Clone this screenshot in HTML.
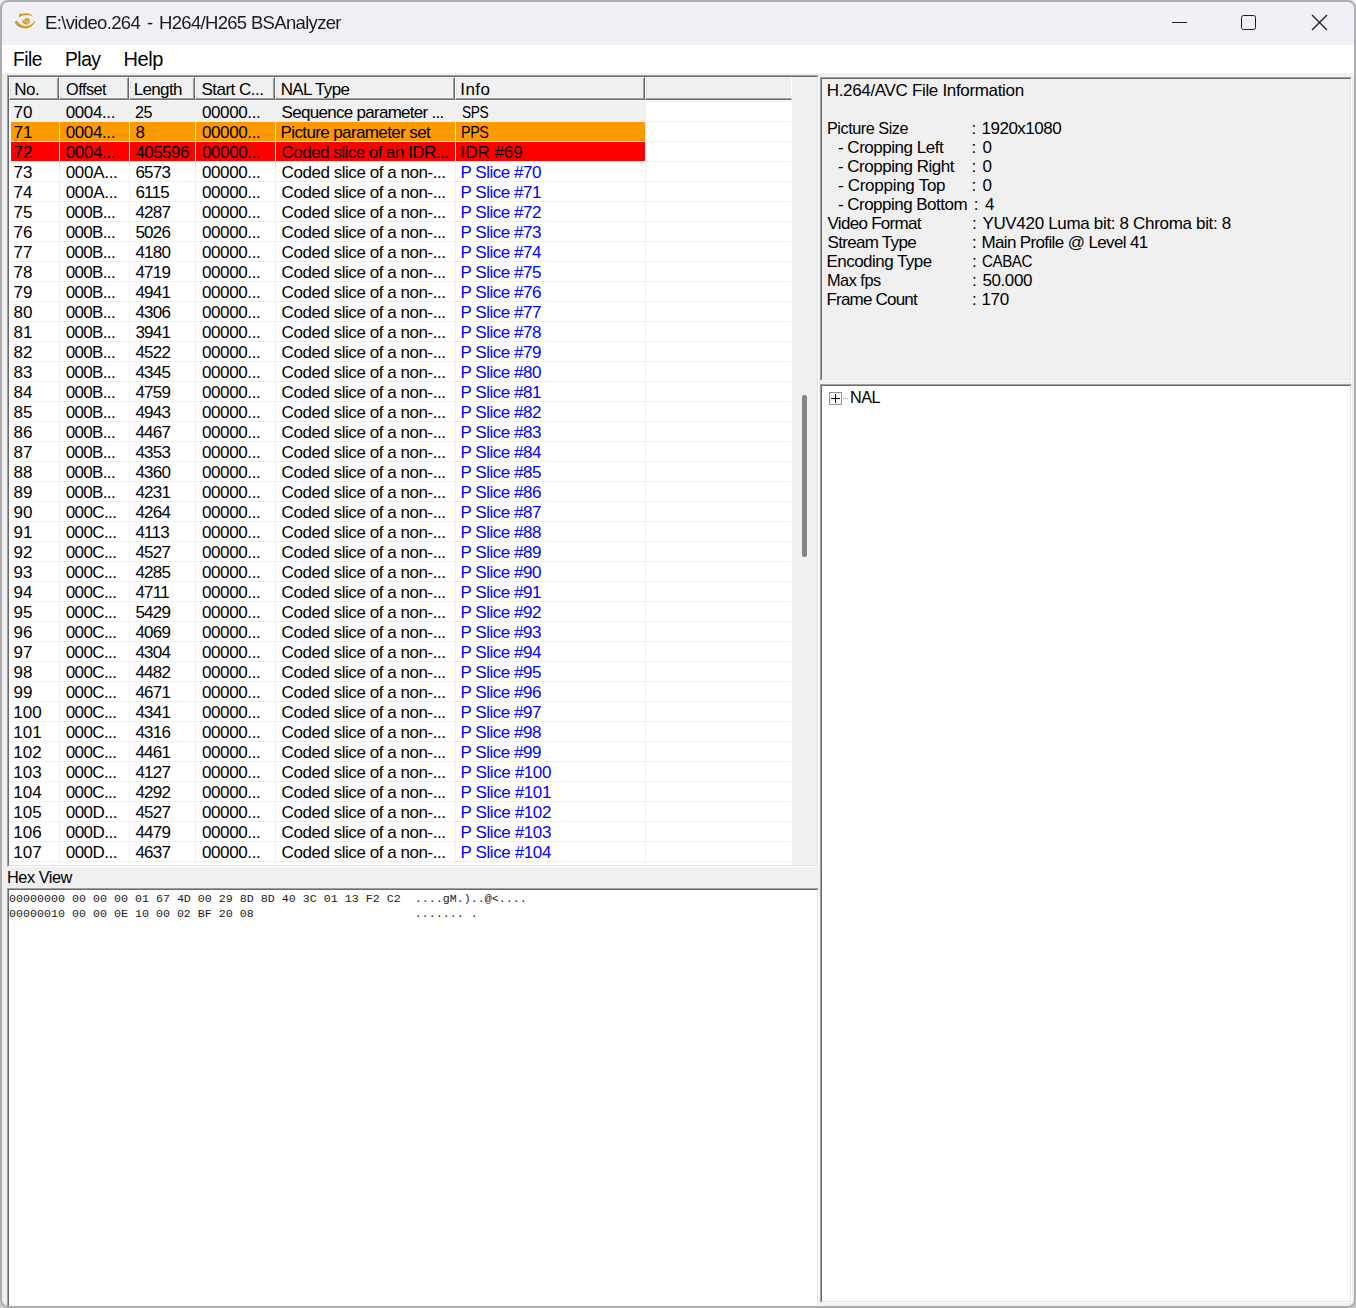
<!DOCTYPE html><html><head><meta charset="utf-8"><title>H264/H265 BSAnalyzer</title><style>
*{margin:0;padding:0;box-sizing:border-box}
html,body{width:1356px;height:1308px;overflow:hidden;background:linear-gradient(#f0f0f0 0,#f0f0f0 50%,#cdcdcd 50%)}
body{position:relative;font-family:"Liberation Sans",sans-serif;color:#000}
.a{position:absolute}
#win{position:absolute;left:0;top:0;width:1356px;height:1308px;border-radius:8px;overflow:hidden;background:#f0f0f0}
#frame{position:absolute;left:0;top:0;width:1356px;height:1308px;border-radius:8px;border:2px solid #adadad;pointer-events:none}
#title{position:absolute;left:0;top:0;width:1356px;height:45px;background:#f0f1f7}
#menu{position:absolute;left:0;top:45px;width:1356px;height:28px;background:#fff}
.t{position:absolute;white-space:pre;line-height:20px;font-size:17px}
.sunk{position:absolute;border-top:1px solid #a0a0a0;border-left:1px solid #a0a0a0;border-right:1px solid #fff;border-bottom:1px solid #fff}
.sunk>.in{position:absolute;left:0;top:0;right:0;bottom:0;border-top:1px solid #696969;border-left:1px solid #696969;border-right:1px solid #e3e3e3;border-bottom:1px solid #e3e3e3}
.hd{position:absolute;top:77px;height:23px;background:#f0f0f0;border-top:1px solid #fff;border-left:1px solid #fff;border-right:1px solid #696969;border-bottom:1px solid #696969;box-shadow:inset -1px -1px 0 #a0a0a0, inset 1px 1px 0 #e3e3e3}
.gh{position:absolute;height:1px;background:#f0f0f0}
.gv{position:absolute;width:1px;background:#f0f0f0}
.rb{position:absolute;height:19px}
.mono{position:absolute;white-space:pre;font-family:"Liberation Mono",monospace;font-size:11.667px;line-height:15px;color:#1a1a1a}
</style></head><body>
<div id="win">
<div id="title"></div>
<svg class="a" style="left:12px;top:10px" width="26" height="22" viewBox="0 0 26 22">
<defs><radialGradient id="pg" cx="0.7" cy="0.65" r="0.8"><stop offset="0" stop-color="#e8c43c"/><stop offset="1" stop-color="#cf9530"/></radialGradient></defs>
<path d="M7.3 7.9 C6.8 6.8 6.8 4.6 7.6 3.6 C8 3 8.6 3.2 9.2 3.9 C11.5 3.2 14.5 3.1 17 3.7 C18.8 4.2 20.3 5.2 21.1 6.6 C19.9 6.2 18.6 5.6 16.8 5.3 C14.5 5 11.5 5.1 9.6 5.7 C8.6 6.1 8 6.9 7.3 7.9 Z" fill="#d39a28"/>
<ellipse cx="15.2" cy="11.2" rx="2.9" ry="3.3" fill="url(#pg)"/>
<path d="M10.4 8.8 C10.1 10.5 10.2 13.6 13.2 14.3 C14.2 14.5 14.8 14.3 15.2 14.1 C13.5 13.9 11.9 12.8 11.4 10.8 C11.2 10 11 9.2 10.4 8.8 Z" fill="#c98b2c"/>
<path d="M3 12.8 C4.8 16.4 9 18.4 13.5 18.4 C18 18.3 21.6 15.5 23.3 11.3 C23.1 10.9 22.8 10.9 22.5 11.1 C20.6 14.4 17.2 16.1 13.6 16.1 C10.2 16.1 7.5 14.3 5.8 11.5 C5.1 10.5 3.8 10.4 3.2 11.3 C2.9 11.8 2.9 12.3 3 12.8 Z" fill="#d29628"/>
</svg>
<div class="a" style="left:1172px;top:22px;width:15px;height:1px;background:#222"></div>
<div class="a" style="left:1241px;top:15px;width:15px;height:15px;border:1.5px solid #1c1c1c;border-radius:2.5px"></div>
<svg class="a" style="left:1311px;top:14px" width="17" height="17" viewBox="0 0 17 17"><path d="M1 1L16 16M16 1L1 16" stroke="#1c1c1c" stroke-width="1.3"/></svg>
<div id="menu"></div>
<div class="sunk" style="left:7px;top:75px;width:812px;height:792px"><div class="in"></div></div>
<div class="a" style="left:9px;top:77px;width:783px;height:788px;background:#fff"></div>
<div class="a" style="left:792px;top:77px;width:25px;height:788px;background:#f0f0f0"></div>
<div class="a" style="left:802px;top:395px;width:5px;height:162px;background:#858585;border-radius:3px"></div>
<div class="hd" style="left:9px;width:50px"></div>
<div class="hd" style="left:59px;width:70px"></div>
<div class="hd" style="left:129px;width:66px"></div>
<div class="hd" style="left:195px;width:80px"></div>
<div class="hd" style="left:275px;width:180px"></div>
<div class="hd" style="left:455px;width:190px"></div>
<div class="hd" style="left:645px;width:147px;border-right:1px solid #fff;box-shadow:inset 0 -1px 0 #a0a0a0, inset 1px 1px 0 #e3e3e3"></div>
<div class="rb" style="left:11px;top:101px;width:634px;height:20px;background:#f0f0f0"></div>
<div class="rb" style="left:11px;top:122px;width:634px;background:#ff9900"></div>
<div class="rb" style="left:11px;top:142px;width:634px;background:#ff0000"></div>
<div class="gh" style="left:9px;top:101px;width:782px"></div>
<div class="gh" style="left:9px;top:121px;width:782px"></div>
<div class="gh" style="left:9px;top:141px;width:782px"></div>
<div class="gh" style="left:9px;top:161px;width:782px"></div>
<div class="gh" style="left:9px;top:181px;width:782px"></div>
<div class="gh" style="left:9px;top:201px;width:782px"></div>
<div class="gh" style="left:9px;top:221px;width:782px"></div>
<div class="gh" style="left:9px;top:241px;width:782px"></div>
<div class="gh" style="left:9px;top:261px;width:782px"></div>
<div class="gh" style="left:9px;top:281px;width:782px"></div>
<div class="gh" style="left:9px;top:301px;width:782px"></div>
<div class="gh" style="left:9px;top:321px;width:782px"></div>
<div class="gh" style="left:9px;top:341px;width:782px"></div>
<div class="gh" style="left:9px;top:361px;width:782px"></div>
<div class="gh" style="left:9px;top:381px;width:782px"></div>
<div class="gh" style="left:9px;top:401px;width:782px"></div>
<div class="gh" style="left:9px;top:421px;width:782px"></div>
<div class="gh" style="left:9px;top:441px;width:782px"></div>
<div class="gh" style="left:9px;top:461px;width:782px"></div>
<div class="gh" style="left:9px;top:481px;width:782px"></div>
<div class="gh" style="left:9px;top:501px;width:782px"></div>
<div class="gh" style="left:9px;top:521px;width:782px"></div>
<div class="gh" style="left:9px;top:541px;width:782px"></div>
<div class="gh" style="left:9px;top:561px;width:782px"></div>
<div class="gh" style="left:9px;top:581px;width:782px"></div>
<div class="gh" style="left:9px;top:601px;width:782px"></div>
<div class="gh" style="left:9px;top:621px;width:782px"></div>
<div class="gh" style="left:9px;top:641px;width:782px"></div>
<div class="gh" style="left:9px;top:661px;width:782px"></div>
<div class="gh" style="left:9px;top:681px;width:782px"></div>
<div class="gh" style="left:9px;top:701px;width:782px"></div>
<div class="gh" style="left:9px;top:721px;width:782px"></div>
<div class="gh" style="left:9px;top:741px;width:782px"></div>
<div class="gh" style="left:9px;top:761px;width:782px"></div>
<div class="gh" style="left:9px;top:781px;width:782px"></div>
<div class="gh" style="left:9px;top:801px;width:782px"></div>
<div class="gh" style="left:9px;top:821px;width:782px"></div>
<div class="gh" style="left:9px;top:841px;width:782px"></div>
<div class="gh" style="left:9px;top:861px;width:782px"></div>
<div class="gv" style="left:59px;top:100px;height:765px"></div>
<div class="gv" style="left:129px;top:100px;height:765px"></div>
<div class="gv" style="left:195px;top:100px;height:765px"></div>
<div class="gv" style="left:275px;top:100px;height:765px"></div>
<div class="gv" style="left:455px;top:100px;height:765px"></div>
<div class="gv" style="left:645px;top:100px;height:765px"></div>
<div class="sunk" style="left:7px;top:888px;width:812px;height:430px"><div class="in"></div></div>
<div class="a" style="left:9px;top:890px;width:808px;height:420px;background:#fff"></div>
<div class="mono" style="left:9px;top:892px">00000000 00 00 00 01 67 4D 00 29 8D 8D 40 3C 01 13 F2 C2  ....gM.)..@&lt;....
00000010 00 00 0E 10 00 02 BF 20 08                       ....... .</div>
<div class="sunk" style="left:820px;top:77px;width:532px;height:304px"><div class="in"></div></div>
<div class="sunk" style="left:820px;top:384px;width:532px;height:919px"><div class="in"></div></div>
<div class="a" style="left:822px;top:386px;width:528px;height:915px;background:#fff"></div>
<div class="a" style="left:829px;top:392px;width:13px;height:13px;border:1px solid #919191;background:#fff"></div>
<div class="a" style="left:831px;top:398px;width:9px;height:1px;background:#000"></div>
<div class="a" style="left:835px;top:394px;width:1px;height:9px;background:#000"></div>
<div class="a" style="left:843px;top:398px;width:1px;height:1px;background:#a0a0a0"></div>
<div class="a" style="left:845px;top:398px;width:1px;height:1px;background:#a0a0a0"></div>
<div class="a" style="left:847px;top:398px;width:1px;height:1px;background:#a0a0a0"></div>
<div class="t" style="left:45.20px;top:13px;font-size:18.5px;letter-spacing:-0.642px;color:#1b1b1b;will-change:transform">E:\video.264</div>
<div class="t" style="left:147.20px;top:13px;font-size:18.5px;color:#1b1b1b;will-change:transform">-</div>
<div class="t" style="left:158.90px;top:13px;font-size:18.5px;letter-spacing:-0.680px;color:#1b1b1b;will-change:transform">H264/H265 BSAnalyzer</div>
<div class="t" style="left:13.14px;top:49px;font-size:20px;letter-spacing:-0.500px;transform:scaleX(0.9560);transform-origin:0 0">File</div>
<div class="t" style="left:65.04px;top:49px;font-size:20px;letter-spacing:-0.500px;transform:scaleX(0.9614);transform-origin:0 0">Play</div>
<div class="t" style="left:123.40px;top:49px;font-size:20px;letter-spacing:-0.370px">Help</div>
<div class="t" style="left:14.30px;top:80px;letter-spacing:-0.466px">No.</div>
<div class="t" style="left:65.80px;top:80px;letter-spacing:-0.500px;transform:scaleX(0.9552);transform-origin:0 0">Offset</div>
<div class="t" style="left:133.70px;top:80px;letter-spacing:-0.648px">Length</div>
<div class="t" style="left:201.50px;top:80px;letter-spacing:-0.516px">Start C...</div>
<div class="t" style="left:280.70px;top:80px;letter-spacing:-0.628px">NAL Type</div>
<div class="t" style="left:460.30px;top:80px;letter-spacing:0.433px">Info</div>
<div class="t" style="left:13.60px;top:103px">70</div>
<div class="t" style="left:65.70px;top:103px;letter-spacing:-0.377px">0004...</div>
<div class="t" style="left:135.40px;top:103px;letter-spacing:-0.500px;transform:scaleX(0.9468);transform-origin:0 0">25</div>
<div class="t" style="left:201.90px;top:103px;letter-spacing:-0.374px">00000...</div>
<div class="t" style="left:281.60px;top:103px;letter-spacing:-0.711px">Sequence parameter ...</div>
<div class="t" style="left:461.50px;top:103px;letter-spacing:-0.500px;transform:scaleX(0.8048);transform-origin:0 0">SPS</div>
<div class="t" style="left:13.60px;top:123px">71</div>
<div class="t" style="left:65.70px;top:123px;letter-spacing:-0.377px">0004...</div>
<div class="t" style="left:135.40px;top:123px;letter-spacing:-0.755px">8</div>
<div class="t" style="left:201.90px;top:123px;letter-spacing:-0.374px">00000...</div>
<div class="t" style="left:280.60px;top:123px;letter-spacing:-0.619px">Picture parameter set</div>
<div class="t" style="left:460.66px;top:123px;letter-spacing:-0.500px;transform:scaleX(0.8429);transform-origin:0 0">PPS</div>
<div class="t" style="left:13.60px;top:143px">72</div>
<div class="t" style="left:65.70px;top:143px;letter-spacing:-0.377px">0004...</div>
<div class="t" style="left:135.40px;top:143px;letter-spacing:-0.555px">405596</div>
<div class="t" style="left:201.90px;top:143px;letter-spacing:-0.374px">00000...</div>
<div class="t" style="left:281.60px;top:143px;letter-spacing:-0.531px">Coded slice of an IDR...</div>
<div class="t" style="left:460.50px;top:143px;letter-spacing:-0.018px">IDR #69</div>
<div class="t" style="left:13.60px;top:163px">73</div>
<div class="t" style="left:65.70px;top:163px;letter-spacing:-0.291px">000A...</div>
<div class="t" style="left:135.40px;top:163px;letter-spacing:-0.755px">6573</div>
<div class="t" style="left:201.90px;top:163px;letter-spacing:-0.374px">00000...</div>
<div class="t" style="left:281.60px;top:163px;letter-spacing:-0.457px">Coded slice of a non-...</div>
<div class="t" style="left:460.50px;top:163px;letter-spacing:-0.484px;color:#0000ff">P Slice #70</div>
<div class="t" style="left:13.60px;top:183px">74</div>
<div class="t" style="left:65.70px;top:183px;letter-spacing:-0.291px">000A...</div>
<div class="t" style="left:135.40px;top:183px;letter-spacing:-0.755px">6115</div>
<div class="t" style="left:201.90px;top:183px;letter-spacing:-0.374px">00000...</div>
<div class="t" style="left:281.60px;top:183px;letter-spacing:-0.457px">Coded slice of a non-...</div>
<div class="t" style="left:460.50px;top:183px;letter-spacing:-0.484px;color:#0000ff">P Slice #71</div>
<div class="t" style="left:13.60px;top:203px">75</div>
<div class="t" style="left:65.70px;top:203px;letter-spacing:-0.658px">000B...</div>
<div class="t" style="left:135.40px;top:203px;letter-spacing:-0.755px">4287</div>
<div class="t" style="left:201.90px;top:203px;letter-spacing:-0.374px">00000...</div>
<div class="t" style="left:281.60px;top:203px;letter-spacing:-0.457px">Coded slice of a non-...</div>
<div class="t" style="left:460.50px;top:203px;letter-spacing:-0.484px;color:#0000ff">P Slice #72</div>
<div class="t" style="left:13.60px;top:223px">76</div>
<div class="t" style="left:65.70px;top:223px;letter-spacing:-0.658px">000B...</div>
<div class="t" style="left:135.40px;top:223px;letter-spacing:-0.755px">5026</div>
<div class="t" style="left:201.90px;top:223px;letter-spacing:-0.374px">00000...</div>
<div class="t" style="left:281.60px;top:223px;letter-spacing:-0.457px">Coded slice of a non-...</div>
<div class="t" style="left:460.50px;top:223px;letter-spacing:-0.484px;color:#0000ff">P Slice #73</div>
<div class="t" style="left:13.60px;top:243px">77</div>
<div class="t" style="left:65.70px;top:243px;letter-spacing:-0.658px">000B...</div>
<div class="t" style="left:135.40px;top:243px;letter-spacing:-0.755px">4180</div>
<div class="t" style="left:201.90px;top:243px;letter-spacing:-0.374px">00000...</div>
<div class="t" style="left:281.60px;top:243px;letter-spacing:-0.457px">Coded slice of a non-...</div>
<div class="t" style="left:460.50px;top:243px;letter-spacing:-0.484px;color:#0000ff">P Slice #74</div>
<div class="t" style="left:13.60px;top:263px">78</div>
<div class="t" style="left:65.70px;top:263px;letter-spacing:-0.658px">000B...</div>
<div class="t" style="left:135.40px;top:263px;letter-spacing:-0.755px">4719</div>
<div class="t" style="left:201.90px;top:263px;letter-spacing:-0.374px">00000...</div>
<div class="t" style="left:281.60px;top:263px;letter-spacing:-0.457px">Coded slice of a non-...</div>
<div class="t" style="left:460.50px;top:263px;letter-spacing:-0.484px;color:#0000ff">P Slice #75</div>
<div class="t" style="left:13.60px;top:283px">79</div>
<div class="t" style="left:65.70px;top:283px;letter-spacing:-0.658px">000B...</div>
<div class="t" style="left:135.40px;top:283px;letter-spacing:-0.755px">4941</div>
<div class="t" style="left:201.90px;top:283px;letter-spacing:-0.374px">00000...</div>
<div class="t" style="left:281.60px;top:283px;letter-spacing:-0.457px">Coded slice of a non-...</div>
<div class="t" style="left:460.50px;top:283px;letter-spacing:-0.484px;color:#0000ff">P Slice #76</div>
<div class="t" style="left:13.60px;top:303px">80</div>
<div class="t" style="left:65.70px;top:303px;letter-spacing:-0.658px">000B...</div>
<div class="t" style="left:135.40px;top:303px;letter-spacing:-0.755px">4306</div>
<div class="t" style="left:201.90px;top:303px;letter-spacing:-0.374px">00000...</div>
<div class="t" style="left:281.60px;top:303px;letter-spacing:-0.457px">Coded slice of a non-...</div>
<div class="t" style="left:460.50px;top:303px;letter-spacing:-0.484px;color:#0000ff">P Slice #77</div>
<div class="t" style="left:13.60px;top:323px">81</div>
<div class="t" style="left:65.70px;top:323px;letter-spacing:-0.658px">000B...</div>
<div class="t" style="left:135.40px;top:323px;letter-spacing:-0.755px">3941</div>
<div class="t" style="left:201.90px;top:323px;letter-spacing:-0.374px">00000...</div>
<div class="t" style="left:281.60px;top:323px;letter-spacing:-0.457px">Coded slice of a non-...</div>
<div class="t" style="left:460.50px;top:323px;letter-spacing:-0.484px;color:#0000ff">P Slice #78</div>
<div class="t" style="left:13.60px;top:343px">82</div>
<div class="t" style="left:65.70px;top:343px;letter-spacing:-0.658px">000B...</div>
<div class="t" style="left:135.40px;top:343px;letter-spacing:-0.755px">4522</div>
<div class="t" style="left:201.90px;top:343px;letter-spacing:-0.374px">00000...</div>
<div class="t" style="left:281.60px;top:343px;letter-spacing:-0.457px">Coded slice of a non-...</div>
<div class="t" style="left:460.50px;top:343px;letter-spacing:-0.484px;color:#0000ff">P Slice #79</div>
<div class="t" style="left:13.60px;top:363px">83</div>
<div class="t" style="left:65.70px;top:363px;letter-spacing:-0.658px">000B...</div>
<div class="t" style="left:135.40px;top:363px;letter-spacing:-0.755px">4345</div>
<div class="t" style="left:201.90px;top:363px;letter-spacing:-0.374px">00000...</div>
<div class="t" style="left:281.60px;top:363px;letter-spacing:-0.457px">Coded slice of a non-...</div>
<div class="t" style="left:460.50px;top:363px;letter-spacing:-0.484px;color:#0000ff">P Slice #80</div>
<div class="t" style="left:13.60px;top:383px">84</div>
<div class="t" style="left:65.70px;top:383px;letter-spacing:-0.658px">000B...</div>
<div class="t" style="left:135.40px;top:383px;letter-spacing:-0.755px">4759</div>
<div class="t" style="left:201.90px;top:383px;letter-spacing:-0.374px">00000...</div>
<div class="t" style="left:281.60px;top:383px;letter-spacing:-0.457px">Coded slice of a non-...</div>
<div class="t" style="left:460.50px;top:383px;letter-spacing:-0.484px;color:#0000ff">P Slice #81</div>
<div class="t" style="left:13.60px;top:403px">85</div>
<div class="t" style="left:65.70px;top:403px;letter-spacing:-0.658px">000B...</div>
<div class="t" style="left:135.40px;top:403px;letter-spacing:-0.755px">4943</div>
<div class="t" style="left:201.90px;top:403px;letter-spacing:-0.374px">00000...</div>
<div class="t" style="left:281.60px;top:403px;letter-spacing:-0.457px">Coded slice of a non-...</div>
<div class="t" style="left:460.50px;top:403px;letter-spacing:-0.484px;color:#0000ff">P Slice #82</div>
<div class="t" style="left:13.60px;top:423px">86</div>
<div class="t" style="left:65.70px;top:423px;letter-spacing:-0.658px">000B...</div>
<div class="t" style="left:135.40px;top:423px;letter-spacing:-0.755px">4467</div>
<div class="t" style="left:201.90px;top:423px;letter-spacing:-0.374px">00000...</div>
<div class="t" style="left:281.60px;top:423px;letter-spacing:-0.457px">Coded slice of a non-...</div>
<div class="t" style="left:460.50px;top:423px;letter-spacing:-0.484px;color:#0000ff">P Slice #83</div>
<div class="t" style="left:13.60px;top:443px">87</div>
<div class="t" style="left:65.70px;top:443px;letter-spacing:-0.658px">000B...</div>
<div class="t" style="left:135.40px;top:443px;letter-spacing:-0.755px">4353</div>
<div class="t" style="left:201.90px;top:443px;letter-spacing:-0.374px">00000...</div>
<div class="t" style="left:281.60px;top:443px;letter-spacing:-0.457px">Coded slice of a non-...</div>
<div class="t" style="left:460.50px;top:443px;letter-spacing:-0.484px;color:#0000ff">P Slice #84</div>
<div class="t" style="left:13.60px;top:463px">88</div>
<div class="t" style="left:65.70px;top:463px;letter-spacing:-0.658px">000B...</div>
<div class="t" style="left:135.40px;top:463px;letter-spacing:-0.755px">4360</div>
<div class="t" style="left:201.90px;top:463px;letter-spacing:-0.374px">00000...</div>
<div class="t" style="left:281.60px;top:463px;letter-spacing:-0.457px">Coded slice of a non-...</div>
<div class="t" style="left:460.50px;top:463px;letter-spacing:-0.484px;color:#0000ff">P Slice #85</div>
<div class="t" style="left:13.60px;top:483px">89</div>
<div class="t" style="left:65.70px;top:483px;letter-spacing:-0.658px">000B...</div>
<div class="t" style="left:135.40px;top:483px;letter-spacing:-0.755px">4231</div>
<div class="t" style="left:201.90px;top:483px;letter-spacing:-0.374px">00000...</div>
<div class="t" style="left:281.60px;top:483px;letter-spacing:-0.457px">Coded slice of a non-...</div>
<div class="t" style="left:460.50px;top:483px;letter-spacing:-0.484px;color:#0000ff">P Slice #86</div>
<div class="t" style="left:13.60px;top:503px">90</div>
<div class="t" style="left:65.70px;top:503px;letter-spacing:-0.598px">000C...</div>
<div class="t" style="left:135.40px;top:503px;letter-spacing:-0.755px">4264</div>
<div class="t" style="left:201.90px;top:503px;letter-spacing:-0.374px">00000...</div>
<div class="t" style="left:281.60px;top:503px;letter-spacing:-0.457px">Coded slice of a non-...</div>
<div class="t" style="left:460.50px;top:503px;letter-spacing:-0.484px;color:#0000ff">P Slice #87</div>
<div class="t" style="left:13.60px;top:523px">91</div>
<div class="t" style="left:65.70px;top:523px;letter-spacing:-0.598px">000C...</div>
<div class="t" style="left:135.40px;top:523px;letter-spacing:-0.755px">4113</div>
<div class="t" style="left:201.90px;top:523px;letter-spacing:-0.374px">00000...</div>
<div class="t" style="left:281.60px;top:523px;letter-spacing:-0.457px">Coded slice of a non-...</div>
<div class="t" style="left:460.50px;top:523px;letter-spacing:-0.484px;color:#0000ff">P Slice #88</div>
<div class="t" style="left:13.60px;top:543px">92</div>
<div class="t" style="left:65.70px;top:543px;letter-spacing:-0.598px">000C...</div>
<div class="t" style="left:135.40px;top:543px;letter-spacing:-0.755px">4527</div>
<div class="t" style="left:201.90px;top:543px;letter-spacing:-0.374px">00000...</div>
<div class="t" style="left:281.60px;top:543px;letter-spacing:-0.457px">Coded slice of a non-...</div>
<div class="t" style="left:460.50px;top:543px;letter-spacing:-0.484px;color:#0000ff">P Slice #89</div>
<div class="t" style="left:13.60px;top:563px">93</div>
<div class="t" style="left:65.70px;top:563px;letter-spacing:-0.598px">000C...</div>
<div class="t" style="left:135.40px;top:563px;letter-spacing:-0.755px">4285</div>
<div class="t" style="left:201.90px;top:563px;letter-spacing:-0.374px">00000...</div>
<div class="t" style="left:281.60px;top:563px;letter-spacing:-0.457px">Coded slice of a non-...</div>
<div class="t" style="left:460.50px;top:563px;letter-spacing:-0.484px;color:#0000ff">P Slice #90</div>
<div class="t" style="left:13.60px;top:583px">94</div>
<div class="t" style="left:65.70px;top:583px;letter-spacing:-0.598px">000C...</div>
<div class="t" style="left:135.40px;top:583px;letter-spacing:-0.755px">4711</div>
<div class="t" style="left:201.90px;top:583px;letter-spacing:-0.374px">00000...</div>
<div class="t" style="left:281.60px;top:583px;letter-spacing:-0.457px">Coded slice of a non-...</div>
<div class="t" style="left:460.50px;top:583px;letter-spacing:-0.484px;color:#0000ff">P Slice #91</div>
<div class="t" style="left:13.60px;top:603px">95</div>
<div class="t" style="left:65.70px;top:603px;letter-spacing:-0.598px">000C...</div>
<div class="t" style="left:135.40px;top:603px;letter-spacing:-0.755px">5429</div>
<div class="t" style="left:201.90px;top:603px;letter-spacing:-0.374px">00000...</div>
<div class="t" style="left:281.60px;top:603px;letter-spacing:-0.457px">Coded slice of a non-...</div>
<div class="t" style="left:460.50px;top:603px;letter-spacing:-0.484px;color:#0000ff">P Slice #92</div>
<div class="t" style="left:13.60px;top:623px">96</div>
<div class="t" style="left:65.70px;top:623px;letter-spacing:-0.598px">000C...</div>
<div class="t" style="left:135.40px;top:623px;letter-spacing:-0.755px">4069</div>
<div class="t" style="left:201.90px;top:623px;letter-spacing:-0.374px">00000...</div>
<div class="t" style="left:281.60px;top:623px;letter-spacing:-0.457px">Coded slice of a non-...</div>
<div class="t" style="left:460.50px;top:623px;letter-spacing:-0.484px;color:#0000ff">P Slice #93</div>
<div class="t" style="left:13.60px;top:643px">97</div>
<div class="t" style="left:65.70px;top:643px;letter-spacing:-0.598px">000C...</div>
<div class="t" style="left:135.40px;top:643px;letter-spacing:-0.755px">4304</div>
<div class="t" style="left:201.90px;top:643px;letter-spacing:-0.374px">00000...</div>
<div class="t" style="left:281.60px;top:643px;letter-spacing:-0.457px">Coded slice of a non-...</div>
<div class="t" style="left:460.50px;top:643px;letter-spacing:-0.484px;color:#0000ff">P Slice #94</div>
<div class="t" style="left:13.60px;top:663px">98</div>
<div class="t" style="left:65.70px;top:663px;letter-spacing:-0.598px">000C...</div>
<div class="t" style="left:135.40px;top:663px;letter-spacing:-0.755px">4482</div>
<div class="t" style="left:201.90px;top:663px;letter-spacing:-0.374px">00000...</div>
<div class="t" style="left:281.60px;top:663px;letter-spacing:-0.457px">Coded slice of a non-...</div>
<div class="t" style="left:460.50px;top:663px;letter-spacing:-0.484px;color:#0000ff">P Slice #95</div>
<div class="t" style="left:13.60px;top:683px">99</div>
<div class="t" style="left:65.70px;top:683px;letter-spacing:-0.598px">000C...</div>
<div class="t" style="left:135.40px;top:683px;letter-spacing:-0.755px">4671</div>
<div class="t" style="left:201.90px;top:683px;letter-spacing:-0.374px">00000...</div>
<div class="t" style="left:281.60px;top:683px;letter-spacing:-0.457px">Coded slice of a non-...</div>
<div class="t" style="left:460.50px;top:683px;letter-spacing:-0.484px;color:#0000ff">P Slice #96</div>
<div class="t" style="left:13.30px;top:703px">100</div>
<div class="t" style="left:65.70px;top:703px;letter-spacing:-0.598px">000C...</div>
<div class="t" style="left:135.40px;top:703px;letter-spacing:-0.755px">4341</div>
<div class="t" style="left:201.90px;top:703px;letter-spacing:-0.374px">00000...</div>
<div class="t" style="left:281.60px;top:703px;letter-spacing:-0.457px">Coded slice of a non-...</div>
<div class="t" style="left:460.50px;top:703px;letter-spacing:-0.484px;color:#0000ff">P Slice #97</div>
<div class="t" style="left:13.30px;top:723px">101</div>
<div class="t" style="left:65.70px;top:723px;letter-spacing:-0.598px">000C...</div>
<div class="t" style="left:135.40px;top:723px;letter-spacing:-0.755px">4316</div>
<div class="t" style="left:201.90px;top:723px;letter-spacing:-0.374px">00000...</div>
<div class="t" style="left:281.60px;top:723px;letter-spacing:-0.457px">Coded slice of a non-...</div>
<div class="t" style="left:460.50px;top:723px;letter-spacing:-0.484px;color:#0000ff">P Slice #98</div>
<div class="t" style="left:13.30px;top:743px">102</div>
<div class="t" style="left:65.70px;top:743px;letter-spacing:-0.598px">000C...</div>
<div class="t" style="left:135.40px;top:743px;letter-spacing:-0.755px">4461</div>
<div class="t" style="left:201.90px;top:743px;letter-spacing:-0.374px">00000...</div>
<div class="t" style="left:281.60px;top:743px;letter-spacing:-0.457px">Coded slice of a non-...</div>
<div class="t" style="left:460.50px;top:743px;letter-spacing:-0.484px;color:#0000ff">P Slice #99</div>
<div class="t" style="left:13.30px;top:763px">103</div>
<div class="t" style="left:65.70px;top:763px;letter-spacing:-0.598px">000C...</div>
<div class="t" style="left:135.40px;top:763px;letter-spacing:-0.755px">4127</div>
<div class="t" style="left:201.90px;top:763px;letter-spacing:-0.374px">00000...</div>
<div class="t" style="left:281.60px;top:763px;letter-spacing:-0.457px">Coded slice of a non-...</div>
<div class="t" style="left:460.50px;top:763px;letter-spacing:-0.391px;color:#0000ff">P Slice #100</div>
<div class="t" style="left:13.30px;top:783px">104</div>
<div class="t" style="left:65.70px;top:783px;letter-spacing:-0.598px">000C...</div>
<div class="t" style="left:135.40px;top:783px;letter-spacing:-0.755px">4292</div>
<div class="t" style="left:201.90px;top:783px;letter-spacing:-0.374px">00000...</div>
<div class="t" style="left:281.60px;top:783px;letter-spacing:-0.457px">Coded slice of a non-...</div>
<div class="t" style="left:460.50px;top:783px;letter-spacing:-0.391px;color:#0000ff">P Slice #101</div>
<div class="t" style="left:13.30px;top:803px">105</div>
<div class="t" style="left:65.70px;top:803px;letter-spacing:-0.514px">000D...</div>
<div class="t" style="left:135.40px;top:803px;letter-spacing:-0.755px">4527</div>
<div class="t" style="left:201.90px;top:803px;letter-spacing:-0.374px">00000...</div>
<div class="t" style="left:281.60px;top:803px;letter-spacing:-0.457px">Coded slice of a non-...</div>
<div class="t" style="left:460.50px;top:803px;letter-spacing:-0.391px;color:#0000ff">P Slice #102</div>
<div class="t" style="left:13.30px;top:823px">106</div>
<div class="t" style="left:65.70px;top:823px;letter-spacing:-0.514px">000D...</div>
<div class="t" style="left:135.40px;top:823px;letter-spacing:-0.755px">4479</div>
<div class="t" style="left:201.90px;top:823px;letter-spacing:-0.374px">00000...</div>
<div class="t" style="left:281.60px;top:823px;letter-spacing:-0.457px">Coded slice of a non-...</div>
<div class="t" style="left:460.50px;top:823px;letter-spacing:-0.391px;color:#0000ff">P Slice #103</div>
<div class="t" style="left:13.30px;top:843px">107</div>
<div class="t" style="left:65.70px;top:843px;letter-spacing:-0.514px">000D...</div>
<div class="t" style="left:135.40px;top:843px;letter-spacing:-0.755px">4637</div>
<div class="t" style="left:201.90px;top:843px;letter-spacing:-0.374px">00000...</div>
<div class="t" style="left:281.60px;top:843px;letter-spacing:-0.457px">Coded slice of a non-...</div>
<div class="t" style="left:460.50px;top:843px;letter-spacing:-0.391px;color:#0000ff">P Slice #104</div>
<div class="t" style="left:826.70px;top:81px;letter-spacing:-0.328px">H.264/AVC File Information</div>
<div class="t" style="left:826.54px;top:119px;letter-spacing:-0.500px;transform:scaleX(0.9564);transform-origin:0 0">Picture Size</div>
<div class="t" style="left:971.40px;top:119px">:</div>
<div class="t" style="left:981.60px;top:119px;letter-spacing:-0.510px">1920x1080</div>
<div class="t" style="left:837.90px;top:138px;letter-spacing:-0.473px">- Cropping Left</div>
<div class="t" style="left:971.40px;top:138px">:</div>
<div class="t" style="left:982.60px;top:138px">0</div>
<div class="t" style="left:837.90px;top:157px;letter-spacing:-0.484px">- Cropping Right</div>
<div class="t" style="left:971.40px;top:157px">:</div>
<div class="t" style="left:982.60px;top:157px">0</div>
<div class="t" style="left:837.90px;top:176px;letter-spacing:-0.273px">- Cropping Top</div>
<div class="t" style="left:971.40px;top:176px">:</div>
<div class="t" style="left:982.60px;top:176px">0</div>
<div class="t" style="left:837.90px;top:195px;letter-spacing:-0.518px">- Cropping Bottom</div>
<div class="t" style="left:973.70px;top:195px">:</div>
<div class="t" style="left:984.90px;top:195px">4</div>
<div class="t" style="left:827.50px;top:214px;letter-spacing:-0.710px">Video Format</div>
<div class="t" style="left:972.10px;top:214px">:</div>
<div class="t" style="left:982.40px;top:214px;letter-spacing:-0.324px">YUV420 Luma bit: 8 Chroma bit: 8</div>
<div class="t" style="left:827.50px;top:233px;letter-spacing:-0.692px">Stream Type</div>
<div class="t" style="left:972.10px;top:233px">:</div>
<div class="t" style="left:981.40px;top:233px;letter-spacing:-0.631px">Main Profile @ Level 41</div>
<div class="t" style="left:826.50px;top:252px;letter-spacing:-0.543px">Encoding Type</div>
<div class="t" style="left:972.10px;top:252px">:</div>
<div class="t" style="left:982.40px;top:252px;letter-spacing:-0.500px;transform:scaleX(0.8918);transform-origin:0 0">CABAC</div>
<div class="t" style="left:826.54px;top:271px;letter-spacing:-0.500px;transform:scaleX(0.9579);transform-origin:0 0">Max fps</div>
<div class="t" style="left:972.10px;top:271px">:</div>
<div class="t" style="left:982.40px;top:271px;letter-spacing:-0.388px">50.000</div>
<div class="t" style="left:826.50px;top:290px;letter-spacing:-0.798px">Frame Count</div>
<div class="t" style="left:972.10px;top:290px">:</div>
<div class="t" style="left:981.40px;top:290px;letter-spacing:-0.305px">170</div>
<div class="t" style="left:849.85px;top:388px;letter-spacing:-0.500px;transform:scaleX(0.9538);transform-origin:0 0">NAL</div>
<div class="t" style="left:6.54px;top:868px;letter-spacing:-0.500px;transform:scaleX(0.9613);transform-origin:0 0">Hex View</div>
</div>
<div id="frame"></div>
</body></html>
